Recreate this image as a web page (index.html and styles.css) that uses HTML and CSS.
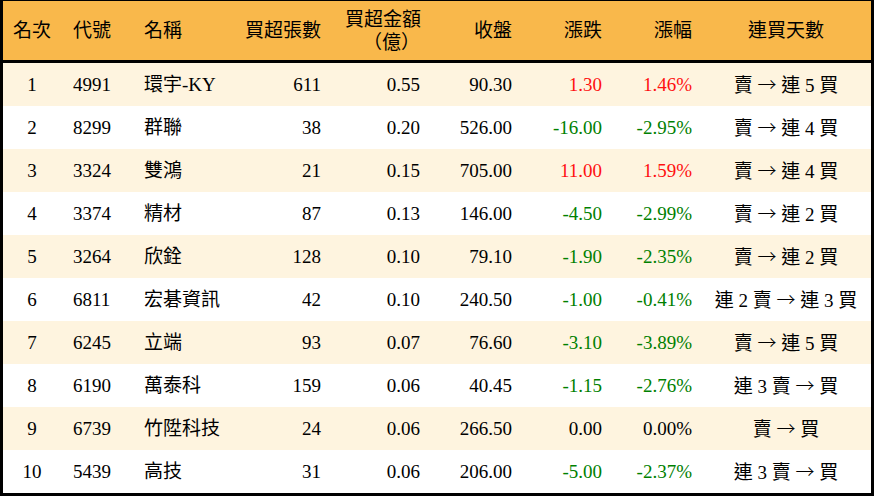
FILE: index.html
```html
<!DOCTYPE html>
<html lang="zh-Hant">
<head>
<meta charset="utf-8">
<title>買超排行</title>
<link rel="stylesheet" href="styles.css">
</head>
<body>
<div class="frame">
<table class="rank">
<colgroup>
<col class="w1"><col class="w2"><col class="w3"><col class="w4"><col class="w5"><col class="w6"><col class="w7"><col class="w8"><col class="w9">
</colgroup>
<thead>
<tr>
<th class="c">名次</th>
<th class="l">代號</th>
<th class="l">名稱</th>
<th class="r">買超張數</th>
<th class="r two">買超金額<br>（億）</th>
<th class="r">收盤</th>
<th class="r">漲跌</th>
<th class="r">漲幅</th>
<th class="c days">連買天數</th>
</tr>
</thead>
<tbody>
<tr><td class="c">1</td><td class="l">4991</td><td class="l">環宇-KY</td><td class="r">611</td><td class="r">0.55</td><td class="r">90.30</td><td class="r up">1.30</td><td class="r up">1.46%</td><td class="c days">賣 <span class="arr">→</span> 連 5 買</td></tr>
<tr><td class="c">2</td><td class="l">8299</td><td class="l">群聯</td><td class="r">38</td><td class="r">0.20</td><td class="r">526.00</td><td class="r down">-16.00</td><td class="r down">-2.95%</td><td class="c days">賣 <span class="arr">→</span> 連 4 買</td></tr>
<tr><td class="c">3</td><td class="l">3324</td><td class="l">雙鴻</td><td class="r">21</td><td class="r">0.15</td><td class="r">705.00</td><td class="r up">11.00</td><td class="r up">1.59%</td><td class="c days">賣 <span class="arr">→</span> 連 4 買</td></tr>
<tr><td class="c">4</td><td class="l">3374</td><td class="l">精材</td><td class="r">87</td><td class="r">0.13</td><td class="r">146.00</td><td class="r down">-4.50</td><td class="r down">-2.99%</td><td class="c days">賣 <span class="arr">→</span> 連 2 買</td></tr>
<tr><td class="c">5</td><td class="l">3264</td><td class="l">欣銓</td><td class="r">128</td><td class="r">0.10</td><td class="r">79.10</td><td class="r down">-1.90</td><td class="r down">-2.35%</td><td class="c days">賣 <span class="arr">→</span> 連 2 買</td></tr>
<tr><td class="c">6</td><td class="l">6811</td><td class="l">宏碁資訊</td><td class="r">42</td><td class="r">0.10</td><td class="r">240.50</td><td class="r down">-1.00</td><td class="r down">-0.41%</td><td class="c days">連 2 賣 <span class="arr">→</span> 連 3 買</td></tr>
<tr><td class="c">7</td><td class="l">6245</td><td class="l">立端</td><td class="r">93</td><td class="r">0.07</td><td class="r">76.60</td><td class="r down">-3.10</td><td class="r down">-3.89%</td><td class="c days">賣 <span class="arr">→</span> 連 5 買</td></tr>
<tr><td class="c">8</td><td class="l">6190</td><td class="l">萬泰科</td><td class="r">159</td><td class="r">0.06</td><td class="r">40.45</td><td class="r down">-1.15</td><td class="r down">-2.76%</td><td class="c days">連 3 賣 <span class="arr">→</span> 買</td></tr>
<tr><td class="c">9</td><td class="l">6739</td><td class="l">竹陞科技</td><td class="r">24</td><td class="r">0.06</td><td class="r">266.50</td><td class="r">0.00</td><td class="r">0.00%</td><td class="c days">賣 <span class="arr">→</span> 買</td></tr>
<tr><td class="c">10</td><td class="l">5439</td><td class="l">高技</td><td class="r">31</td><td class="r">0.06</td><td class="r">206.00</td><td class="r down">-5.00</td><td class="r down">-2.37%</td><td class="c days">連 3 賣 <span class="arr">→</span> 買</td></tr>
</tbody>
</table>
</div>
</body>
</html>
```
FILE: styles.css
```css
html, body {
  margin: 0;
  padding: 0;
  background: #ffffff;
}
.frame {
  width: 874px;
  height: 496px;
  box-sizing: border-box;
  border-style: solid;
  border-color: #000;
  border-width: 1px 3px 3px 3px;
  overflow: hidden;
}
.rank {
  width: 868px;
  table-layout: fixed;
  border-collapse: collapse;
  border-spacing: 0;
  font-family: "Liberation Serif", "Noto Sans CJK TC", serif;
  font-size: 19px;
  color: #000;
}
.w1 { width: 58px; }
.w2 { width: 71px; }
.w3 { width: 98px; }
.w4 { width: 103px; }
.w5 { width: 99px; }
.w6 { width: 92px; }
.w7 { width: 90px; }
.w8 { width: 90px; }
.w9 { width: 167px; }
.rank th {
  height: 59px;
  padding: 0 12px;
  background: #f9b84b;
  font-weight: normal;
  border-bottom: 3px solid #000;
  vertical-align: middle;
  line-height: 23px;
  white-space: nowrap;
}
.rank td {
  height: 43px;
  padding: 0 12px;
  vertical-align: middle;
  white-space: nowrap;
  line-height: 23px;
}
.rank tbody tr:nth-child(odd) td {
  background: #fef4df;
}
.rank tbody tr:nth-child(even) td {
  background: #ffffff;
}
.c { text-align: center; }
.l { text-align: left; }
.r { text-align: right; }
.rank .c:first-child { padding: 0; }
.rank .days { padding: 0 3px 0 0; }
.arr {
  font-family: "Noto Sans CJK TC", sans-serif;
  font-weight: 300;
}
.up { color: #ff1010; }
.down { color: #008000; }
```
